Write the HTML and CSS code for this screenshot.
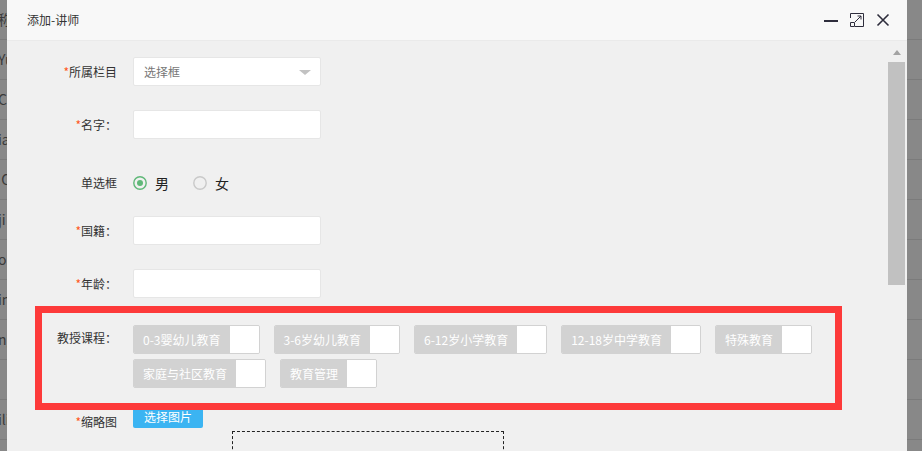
FILE: index.html
```html
<!DOCTYPE html>
<html lang="zh-CN">
  <head>
    <meta charset="UTF-8" />
    <meta name="viewport" content="width=device-width, initial-scale=1.0" />
    <title>添加-讲师</title>
    <link rel="stylesheet" href="styles.css">
  </head>
  <body>
    <div class="page">
      <div class="page-row">称</div>
      <div class="page-row">Yu</div>
      <div class="page-row">Ch</div>
      <div class="page-row">ia</div>
      <div class="page-row">&nbsp;C</div>
      <div class="page-row">ji</div>
      <div class="page-row">o</div>
      <div class="page-row">in</div>
      <div class="page-row">ng</div>
      <div class="page-row"></div>
      <div class="page-row">ili</div>
      <div class="page-row"></div>
    </div>

    <div class="dialog">
      <div class="dialog-head">
        <span class="dialog-title">添加-讲师</span>
        <div class="dialog-tools">
          <svg class="tool" viewBox="0 0 14 14" width="14" height="14">
            <path d="M0 8h14" stroke="#2e2d3c" stroke-width="2" fill="none" />
          </svg>
          <svg class="tool" viewBox="0 0 14 14" width="14" height="14">
            <path d="M0.5 5V0.5h13v13H5" stroke="#2e2d3c" stroke-width="1" fill="none" />
            <path d="M0.5 9.5h4v4h-4z" stroke="#2e2d3c" stroke-width="1" fill="none" />
            <path d="M5 9L11 3M7.5 3H11V6.5" stroke="#2e2d3c" stroke-width="1" fill="none" />
          </svg>
          <svg class="tool" viewBox="0 0 14 14" width="14" height="14">
            <path d="M1.5 1.5l11 11M12.5 1.5l-11 11" stroke="#2e2d3c" stroke-width="1.6" fill="none" />
          </svg>
        </div>
      </div>

      <div class="dialog-body">
        <form class="form">
          <div class="form-item">
            <label class="form-label"><i class="req">*</i>所属栏目</label>
            <div class="select">
              <span class="placeholder">选择框</span>
              <i class="edge"></i>
            </div>
          </div>

          <div class="form-item">
            <label class="form-label"><i class="req">*</i>名字：</label>
            <div class="input"></div>
          </div>

          <div class="form-item form-item-radio">
            <label class="form-label">单选框</label>
            <div class="radio">
              <svg viewBox="0 0 14 14" width="14" height="14">
                <circle cx="7" cy="7" r="6.2" stroke="#5fb878" stroke-width="1.4" fill="none" />
                <circle cx="7" cy="7" r="3" fill="#5fb878" />
              </svg>
              <span>男</span>
            </div>
            <div class="radio">
              <svg viewBox="0 0 14 14" width="14" height="14">
                <circle cx="7" cy="7" r="6.2" stroke="#c9c9c9" stroke-width="1.4" fill="none" />
              </svg>
              <span>女</span>
            </div>
          </div>

          <div class="form-item">
            <label class="form-label"><i class="req">*</i>国籍：</label>
            <div class="input"></div>
          </div>

          <div class="form-item">
            <label class="form-label"><i class="req">*</i>年龄：</label>
            <div class="input"></div>
          </div>

          <div class="form-item form-item-courses">
            <label class="form-label form-label-top">教授课程：</label>
            <div class="chips">
              <div class="chip"><span>0-3婴幼儿教育</span><i></i></div>
              <div class="chip"><span>3-6岁幼儿教育</span><i></i></div>
              <div class="chip"><span>6-12岁小学教育</span><i></i></div>
              <div class="chip"><span>12-18岁中学教育</span><i></i></div>
              <div class="chip"><span>特殊教育</span><i></i></div>
              <div class="chip"><span>家庭与社区教育</span><i></i></div>
              <div class="chip"><span>教育管理</span><i></i></div>
            </div>
          </div>

          <div class="form-item form-item-thumb">
            <label class="form-label form-label-thumb"><i class="req">*</i>缩略图</label>
            <div class="thumb">
              <button type="button" class="btn-pick">选择图片</button>
              <div class="thumb-box"></div>
            </div>
          </div>
        </form>

        <div class="scrollbar">
          <i class="scroll-up"></i>
          <div class="scroll-thumb"></div>
        </div>
      </div>
    </div>

    <div class="mark"></div>
  </body>
</html>
```

FILE: styles.css
```css
* {
  box-sizing: border-box;
}
body {
  margin: 0;
  width: 922px;
  height: 451px;
  overflow: hidden;
  position: relative;
  font-family: "Noto Sans CJK SC", "Noto Sans", sans-serif;
  color: #333;
  background-color: #888;
}
.page-row {
  height: 40px;
  line-height: 39px;
  border-bottom: 1px solid #7b7b7b;
  font-size: 14px;
  color: #3a3a3a;
  text-indent: -2px;
  white-space: nowrap;
}

/* dialog layer */
.dialog {
  position: absolute;
  left: 7px;
  top: 0;
  width: 900px;
  height: 451px;
  background-color: #f0f0f0;
  display: flex;
  flex-direction: column;
}
.dialog-head {
  height: 41px;
  flex: none;
  background-color: #f8f8f8;
  border-bottom: 1px solid #eaeaea;
  display: flex;
  align-items: center;
  justify-content: space-between;
  padding: 0 17px 0 20px;
}
.dialog-title {
  font-size: 12px;
  line-height: 16px;
}
.dialog-tools {
  display: flex;
  gap: 12px;
}
.tool {
  display: block;
}
.dialog-body {
  flex: 1;
  display: flex;
  overflow: hidden;
}

/* form */
.form {
  flex: 1;
  display: flex;
  flex-direction: column;
  padding: 16px 0 0 15px;
  margin: 0;
}
.form-item {
  display: flex;
  align-items: center;
  flex: none;
  height: 29px;
  margin-bottom: 24px;
}
.form-item-radio {
  margin-top: 5px;
  margin-bottom: 19px;
}
.form-label {
  width: 111px;
  flex: none;
  padding-right: 16px;
  text-align: right;
  font-size: 12px;
  line-height: 16px;
  color: #333;
}
.req {
  font-style: normal;
  color: #ff5722;
}
.input,
.select {
  width: 188px;
  height: 29px;
  background-color: #fff;
  border: 1px solid #e6e6e6;
  border-radius: 2px;
}
.select {
  display: flex;
  align-items: center;
  justify-content: space-between;
  padding: 0 9px 0 10px;
}
.placeholder {
  font-size: 12px;
  color: #777;
}
.edge {
  width: 0;
  height: 0;
  border-left: 6px solid transparent;
  border-right: 6px solid transparent;
  border-top: 5px solid #c2c2c2;
  margin-top: 1px;
}
.radio {
  display: flex;
  align-items: center;
  gap: 8px;
  margin-right: 24px;
  font-size: 14px;
  color: #222;
}
.radio svg {
  display: block;
}

/* course checkboxes */
.form-item-courses {
  height: auto;
  align-items: flex-start;
  margin-top: 3px;
  margin-bottom: 18px;
}
.form-label-top {
  padding-top: 5px;
}
.chips {
  display: flex;
  flex-wrap: wrap;
  column-gap: 14px;
  row-gap: 5px;
  width: 740px;
}
.chip {
  display: flex;
  height: 29px;
  border: 1px solid #d2d2d2;
  border-radius: 2px;
  overflow: hidden;
}
.chip span {
  background-color: #d2d2d2;
  color: #fff;
  font-size: 12px;
  line-height: 27px;
  padding: 0 9px;
  white-space: nowrap;
}
.chip i {
  width: 29px;
  background-color: #fff;
}

/* thumbnail */
.form-item-thumb {
  height: auto;
  align-items: flex-start;
}
.form-label-thumb {
  padding-top: 8px;
}
.btn-pick {
  display: block;
  height: 22px;
  padding: 0 11px;
  border: none;
  border-radius: 2px;
  background-color: #3bb4f2;
  color: #fff;
  font-family: inherit;
  font-size: 12px;
  line-height: 22px;
}
.thumb-box {
  width: 272px;
  height: 150px;
  margin: 3px 0 0 99px;
  border: 1px dashed #222;
}

/* scrollbar */
.scrollbar {
  width: 17px;
  flex: none;
  margin-right: 2px;
  display: flex;
  flex-direction: column;
  align-items: center;
}
.scroll-up {
  width: 0;
  height: 0;
  margin-top: 9px;
  border-left: 4.5px solid transparent;
  border-right: 4.5px solid transparent;
  border-bottom: 5px solid #a3a3a3;
}
.scroll-thumb {
  width: 17px;
  height: 223px;
  margin-top: 7px;
  background-color: #c1c1c1;
}

/* annotation box drawn over the form */
.mark {
  position: absolute;
  left: 35px;
  top: 306px;
  width: 807px;
  height: 104px;
  border: 7px solid #fd3a3a;
}
```
